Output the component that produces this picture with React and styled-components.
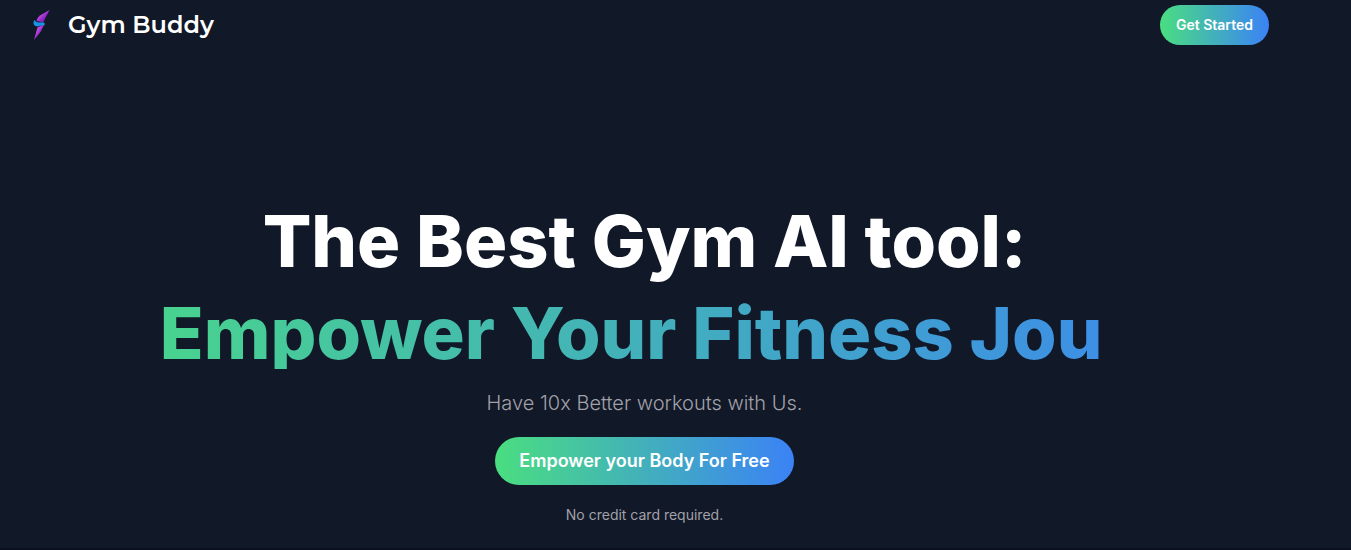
import React from "react";
import styled, { createGlobalStyle } from "styled-components";

const GlobalStyle = createGlobalStyle`
  *, *::before, *::after { box-sizing: border-box; }
  body {
    margin: 0;
    background: #111827;
    color: #fff;
    font-family: Inter, "Liberation Sans", sans-serif;
  }
`;

const Page = styled.div`
  min-height: 100vh;
  display: flex;
  flex-direction: column;
  border-bottom: 2px solid #0b1020;
`;

const Navbar = styled.nav`
  display: flex;
  align-items: center;
  justify-content: space-between;
  padding: 5px 82px 5px 24px;
`;

const Brand = styled.a`
  display: flex;
  align-items: center;
  gap: 12px;
  color: #fff;
  text-decoration: none;
`;

const Logo = styled.svg`
  display: block;
  width: 32px;
  height: 32px;
`;

const BrandName = styled.span`
  font-family: Montserrat, Inter, sans-serif;
  font-size: 24px;
  line-height: 32px;
  font-weight: 600;
`;

const GradientButton = styled.button`
  border: 0;
  border-radius: 999px;
  color: #fff;
  cursor: pointer;
  font-family: inherit;
  font-weight: 600;
  background: linear-gradient(to right, #4ade80, #3b82f6);
  padding: ${(p) => (p.$large ? "10px 24px" : "10px 16px")};
  font-size: ${(p) => (p.$large ? "18px" : "14px")};
  line-height: ${(p) => (p.$large ? "28px" : "20px")};
`;

const Hero = styled.main`
  display: flex;
  flex-direction: column;
  align-items: center;
  gap: 20px;
  padding: 155px 62px 20px 0;
  text-align: center;
`;

const Title = styled.h1`
  align-self: stretch;
  display: flex;
  flex-direction: column;
  gap: 20px;
  margin: 0;
  font-size: 72px;
  line-height: 72px;
  font-weight: 800;
`;

const Typed = styled.span`
  color: transparent;
  background: linear-gradient(to right, #4ade80, #3b82f6);
  background-clip: text;

  &::after {
    content: "|";
    font-weight: 700;
    opacity: 0;
  }
`;

const Tagline = styled.p`
  margin: 0;
  font-size: 20px;
  line-height: 28px;
  font-weight: 300;
  color: #a1a1aa;
`;

const Note = styled.p`
  margin: 0;
  font-size: 14px;
  line-height: 20px;
  color: #a1a1aa;
`;

export default function App() {
  return (
    <Page>
      <GlobalStyle />
      <Navbar>
        <Brand href="#">
          <Logo viewBox="0 0 32 32" aria-hidden="true">
            <defs>
              <linearGradient id="bolt" x1="0" y1="0" x2="1" y2="1">
                <stop offset="0.35" stopColor="#c24ae0" />
                <stop offset="0.6" stopColor="#8a24c4" />
              </linearGradient>
            </defs>
            <path d="M25.500 1 L16 6.500 C14 8 13 10 12.500 12 L19 13.500 Z" fill="url(#bolt)" />
            <path d="M20.500 15 L13.500 18.500 L10 31 L16.500 23 Z" fill="url(#bolt)" />
            <path d="M10.500 11 C9 13 9 16 12 17.300 C15 18 17 15.500 20.500 16.500 L20.500 13.800 C16 13 14 15 10.500 11 Z" fill="#1795e6" />
          </Logo>
          <BrandName>Gym Buddy</BrandName>
        </Brand>
        <GradientButton type="button">Get Started</GradientButton>
      </Navbar>
      <Hero>
        <Title>
          <span>The Best Gym AI tool:</span>
          <Typed>Empower Your Fitness Jou</Typed>
        </Title>
        <Tagline>Have 10x Better workouts with Us.</Tagline>
        <GradientButton type="button" $large>Empower your Body For Free</GradientButton>
        <Note>No credit card required.</Note>
      </Hero>
    </Page>
  );
}
